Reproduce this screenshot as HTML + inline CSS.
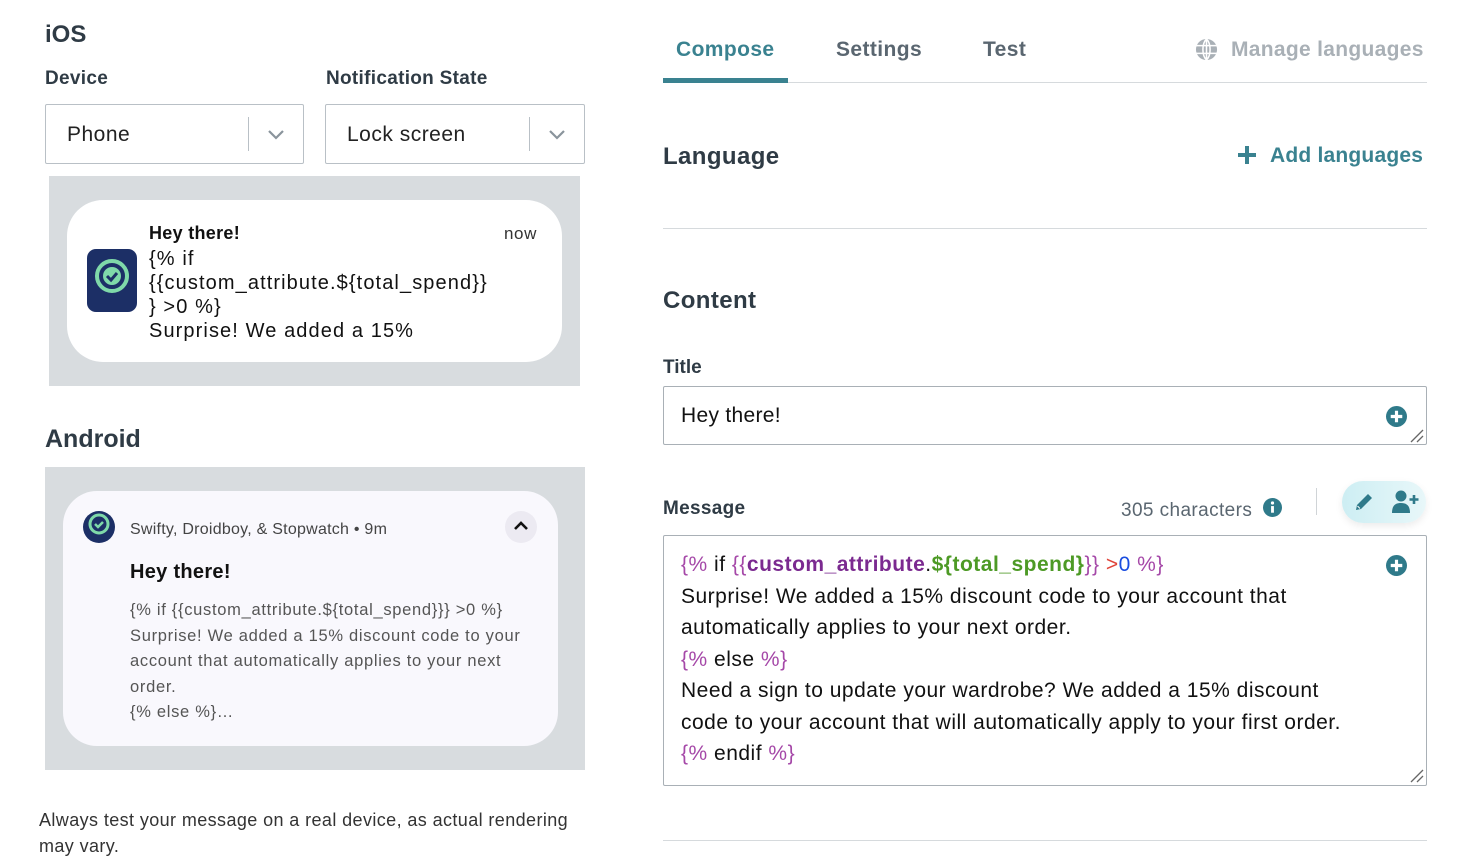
<!DOCTYPE html>
<html><head><meta charset="utf-8"><style>
*{margin:0;padding:0;box-sizing:border-box}
body{width:1478px;height:866px;background:#fff;font-family:"Liberation Sans",sans-serif;color:#2f3b45;position:relative;overflow:hidden}
.a{position:absolute;white-space:nowrap}
.b{font-weight:bold}
.sel{position:absolute;border:1px solid #b9c0c6;border-radius:2px;height:60px;background:#fff;font-size:21px;padding:18px 0 0 21px;color:#222;letter-spacing:0.5px}
.sel .sep{position:absolute;top:12px;width:1px;height:34px;background:#b9c0c6}
.gray{position:absolute;background:#d8dcdf}
.pk{color:#a548a8}.pu{color:#7b2a90;font-weight:bold}.gr{color:#4d9a25;font-weight:bold}.bl{color:#1a4de0}.rd{color:#e0443a}
</style></head><body>
<div class="a b" style="left:45px;top:21px;font-size:24px">iOS</div>
<div class="a b" style="left:45px;top:68px;font-size:19px;letter-spacing:0.3px">Device</div>
<div class="a b" style="left:326px;top:68px;font-size:19px;letter-spacing:0.3px">Notification State</div>
<div class="sel" style="left:45px;top:104px;width:259px">Phone<div class="sep" style="left:202px"></div>
<svg class="a" style="left:221px;top:24px" width="18" height="11" viewBox="0 0 18 11"><path d="M2 2l7 7 7-7" fill="none" stroke="#8a949c" stroke-width="2.2"/></svg></div>
<div class="sel" style="left:325px;top:104px;width:260px">Lock screen<div class="sep" style="left:203px"></div>
<svg class="a" style="left:222px;top:24px" width="18" height="11" viewBox="0 0 18 11"><path d="M2 2l7 7 7-7" fill="none" stroke="#8a949c" stroke-width="2.2"/></svg></div>

<div class="gray" style="left:49px;top:176px;width:531px;height:210px"></div>
<div class="a" style="left:67px;top:200px;width:495px;height:162px;background:#fff;border-radius:36px"></div>
<div class="a" style="left:87px;top:249px;width:50px;height:63px;background:#1c2f66;border-radius:9px">
<svg class="a" style="left:6px;top:8px" width="38" height="38" viewBox="0 0 38 38"><circle cx="19" cy="19" r="15" fill="none" stroke="#7fd9a9" stroke-width="4"/><circle cx="19" cy="19" r="9" fill="#7fd9a9"/><path d="M14 19l4 4 6-7" fill="none" stroke="#1c2f66" stroke-width="3"/></svg></div>
<div class="a b" style="left:149px;top:223px;font-size:18px;color:#111;letter-spacing:0.3px">Hey there!</div>
<div class="a" style="left:504px;top:224px;font-size:17px;color:#333;letter-spacing:0.6px">now</div>
<div class="a" style="left:149px;top:247px;font-size:20px;line-height:24px;color:#111;letter-spacing:1.1px">{% if<br>{{custom_attribute.${total_spend}}<br>} &gt;0 %}<br>Surprise! We added a 15%</div>

<div class="a b" style="left:45px;top:425px;font-size:25px">Android</div>
<div class="gray" style="left:45px;top:467px;width:540px;height:303px"></div>
<div class="a" style="left:63px;top:491px;width:495px;height:255px;background:#f9f8fd;border-radius:34px"></div>
<svg class="a" style="left:83px;top:511px" width="32" height="32" viewBox="0 0 32 32"><circle cx="16" cy="16" r="16" fill="#1c2f66"/><circle cx="16" cy="13" r="9" fill="none" stroke="#7fd9a9" stroke-width="3"/><path d="M12 13l3 3 5-5" fill="none" stroke="#7fd9a9" stroke-width="2.5"/></svg>
<div class="a" style="left:130px;top:521px;font-size:16px;color:#444;letter-spacing:0.25px">Swifty, Droidboy, &amp; Stopwatch • 9m</div>
<div class="a" style="left:505px;top:511px;width:32px;height:32px;border-radius:50%;background:#eceaf2"></div>
<svg class="a" style="left:513px;top:520px" width="16" height="12" viewBox="0 0 16 12"><path d="M2 9l6-6 6 6" fill="none" stroke="#111" stroke-width="2.6"/></svg>
<div class="a b" style="left:130px;top:561px;font-size:20px;color:#111;letter-spacing:0.3px">Hey there!</div>
<div class="a" style="left:130px;top:598px;font-size:16.5px;line-height:25.5px;color:#555;letter-spacing:0.7px">{% if {{custom_attribute.${total_spend}}} &gt;0 %}<br>Surprise! We added a 15% discount code to your<br>account that automatically applies to your next<br>order.<br>{% else %}…</div>
<div class="a" style="left:39px;top:807px;font-size:18px;line-height:26px;color:#333;letter-spacing:0.4px">Always test your message on a real device, as actual rendering<br>may vary.</div>

<!-- right -->
<div class="a b" style="left:676px;top:38px;font-size:21px;color:#3a8290;letter-spacing:0.4px">Compose</div>
<div class="a b" style="left:836px;top:38px;font-size:21px;color:#5a6670;letter-spacing:0.4px">Settings</div>
<div class="a b" style="left:983px;top:38px;font-size:21px;color:#5a6670;letter-spacing:0.4px">Test</div>
<svg class="a" style="left:1195px;top:38px" width="23" height="23" viewBox="0 0 24 24"><circle cx="12" cy="12" r="11" fill="#a9b0b6"/><path d="M1 8h22M1 16h22M12 1v22M12 1c-5 5-5 17 0 22M12 1c5 5 5 17 0 22" fill="none" stroke="#fff" stroke-width="1.6"/></svg>
<div class="a b" style="left:1231px;top:38px;font-size:21px;color:#a9b0b6;letter-spacing:0.3px">Manage languages</div>
<div class="a" style="left:663px;top:82px;width:764px;height:1px;background:#d6dadd"></div>
<div class="a" style="left:663px;top:78px;width:125px;height:5px;background:#3a8290"></div>

<div class="a b" style="left:663px;top:143px;font-size:24px;letter-spacing:0.4px">Language</div>
<svg class="a" style="left:1237px;top:145px" width="20" height="20" viewBox="0 0 20 20"><path d="M10 1v18M1 10h18" stroke="#3a8290" stroke-width="4"/></svg>
<div class="a b" style="left:1270px;top:144px;font-size:21px;color:#3a8290;letter-spacing:0.2px">Add languages</div>
<div class="a" style="left:663px;top:228px;width:764px;height:1px;background:#d6dadd"></div>

<div class="a b" style="left:663px;top:287px;font-size:24px;letter-spacing:0.4px">Content</div>
<div class="a b" style="left:663px;top:357px;font-size:19px">Title</div>
<div class="a" style="left:663px;top:386px;width:764px;height:59px;border:1px solid #a9b0b6;border-radius:2px"></div>
<div class="a" style="left:681px;top:404px;font-size:21px;color:#111;letter-spacing:0.3px">Hey there!</div>
<svg class="a" style="left:1386px;top:406px" width="21" height="21" viewBox="0 0 20 20"><circle cx="10" cy="10" r="10" fill="#2f7a8a"/><path d="M10 4.5v11M4.5 10h11" stroke="#fff" stroke-width="3"/></svg>
<svg class="a" style="left:1409px;top:428px" width="15" height="15" viewBox="0 0 15 15"><path d="M2 14L14 2M8 14l6-6" stroke="#666" stroke-width="1.3"/></svg>

<div class="a b" style="left:663px;top:498px;font-size:19px;letter-spacing:0.3px">Message</div>
<div class="a" style="left:1121px;top:500px;font-size:19px;color:#5a6670;letter-spacing:0.4px">305 characters</div>
<svg class="a" style="left:1263px;top:498px" width="19" height="19" viewBox="0 0 20 20"><circle cx="10" cy="10" r="10" fill="#2f7a8a"/><rect x="8.5" y="8.5" width="3" height="7" fill="#fff"/><circle cx="10" cy="5.3" r="1.7" fill="#fff"/></svg>
<div class="a" style="left:1316px;top:488px;width:1px;height:27px;background:#d0d4d7"></div>
<div class="a" style="left:1342px;top:481px;width:84px;height:42px;border-radius:21px;background:linear-gradient(90deg,#cdeef3,#e8f7f9);box-shadow:0 3px 8px rgba(0,0,0,.08)"></div>
<svg class="a" style="left:1353px;top:491px" width="22" height="22" viewBox="0 0 22 22"><path d="M3 19l1-5L15 3l4 4L8 18z" fill="#2f7a8a"/><path d="M4.5 15l2.5 2.5" stroke="#fff" stroke-width="1"/></svg>
<svg class="a" style="left:1392px;top:490px" width="28" height="24" viewBox="0 0 28 24"><circle cx="9" cy="6" r="5.5" fill="#2f7a8a"/><path d="M0 23c0-7 3-10 9-10s9 3 9 10z" fill="#2f7a8a"/><path d="M22 5v9M17.5 9.5h9" stroke="#2f7a8a" stroke-width="2.6"/></svg>

<div class="a" style="left:663px;top:535px;width:764px;height:251px;border:1px solid #a9b0b6;border-radius:2px"></div>
<svg class="a" style="left:1386px;top:555px" width="21" height="21" viewBox="0 0 20 20"><circle cx="10" cy="10" r="10" fill="#2f7a8a"/><path d="M10 4.5v11M4.5 10h11" stroke="#fff" stroke-width="3"/></svg>
<svg class="a" style="left:1409px;top:768px" width="15" height="15" viewBox="0 0 15 15"><path d="M2 14L14 2M8 14l6-6" stroke="#666" stroke-width="1.3"/></svg>
<div class="a" style="left:681px;top:549px;font-size:21px;line-height:31.5px;color:#111;letter-spacing:0.5px">
<span class="pk">{%</span> if <span class="pk">{{</span><span class="pu">custom_attribute</span>.<span class="gr">${total_spend}</span><span class="pk">}}</span> <span class="rd">&gt;</span><span class="bl">0</span> <span class="pk">%}</span><br>
Surprise! We added a 15% discount code to your account that<br>automatically applies to your next order.<br>
<span class="pk">{%</span> else <span class="pk">%}</span><br>
Need a sign to update your wardrobe? We added a 15% discount<br>code to your account that will automatically apply to your first order.<br>
<span class="pk">{%</span> endif <span class="pk">%}</span></div>
<div class="a" style="left:663px;top:840px;width:764px;height:1px;background:#d6dadd"></div>
</body></html>
